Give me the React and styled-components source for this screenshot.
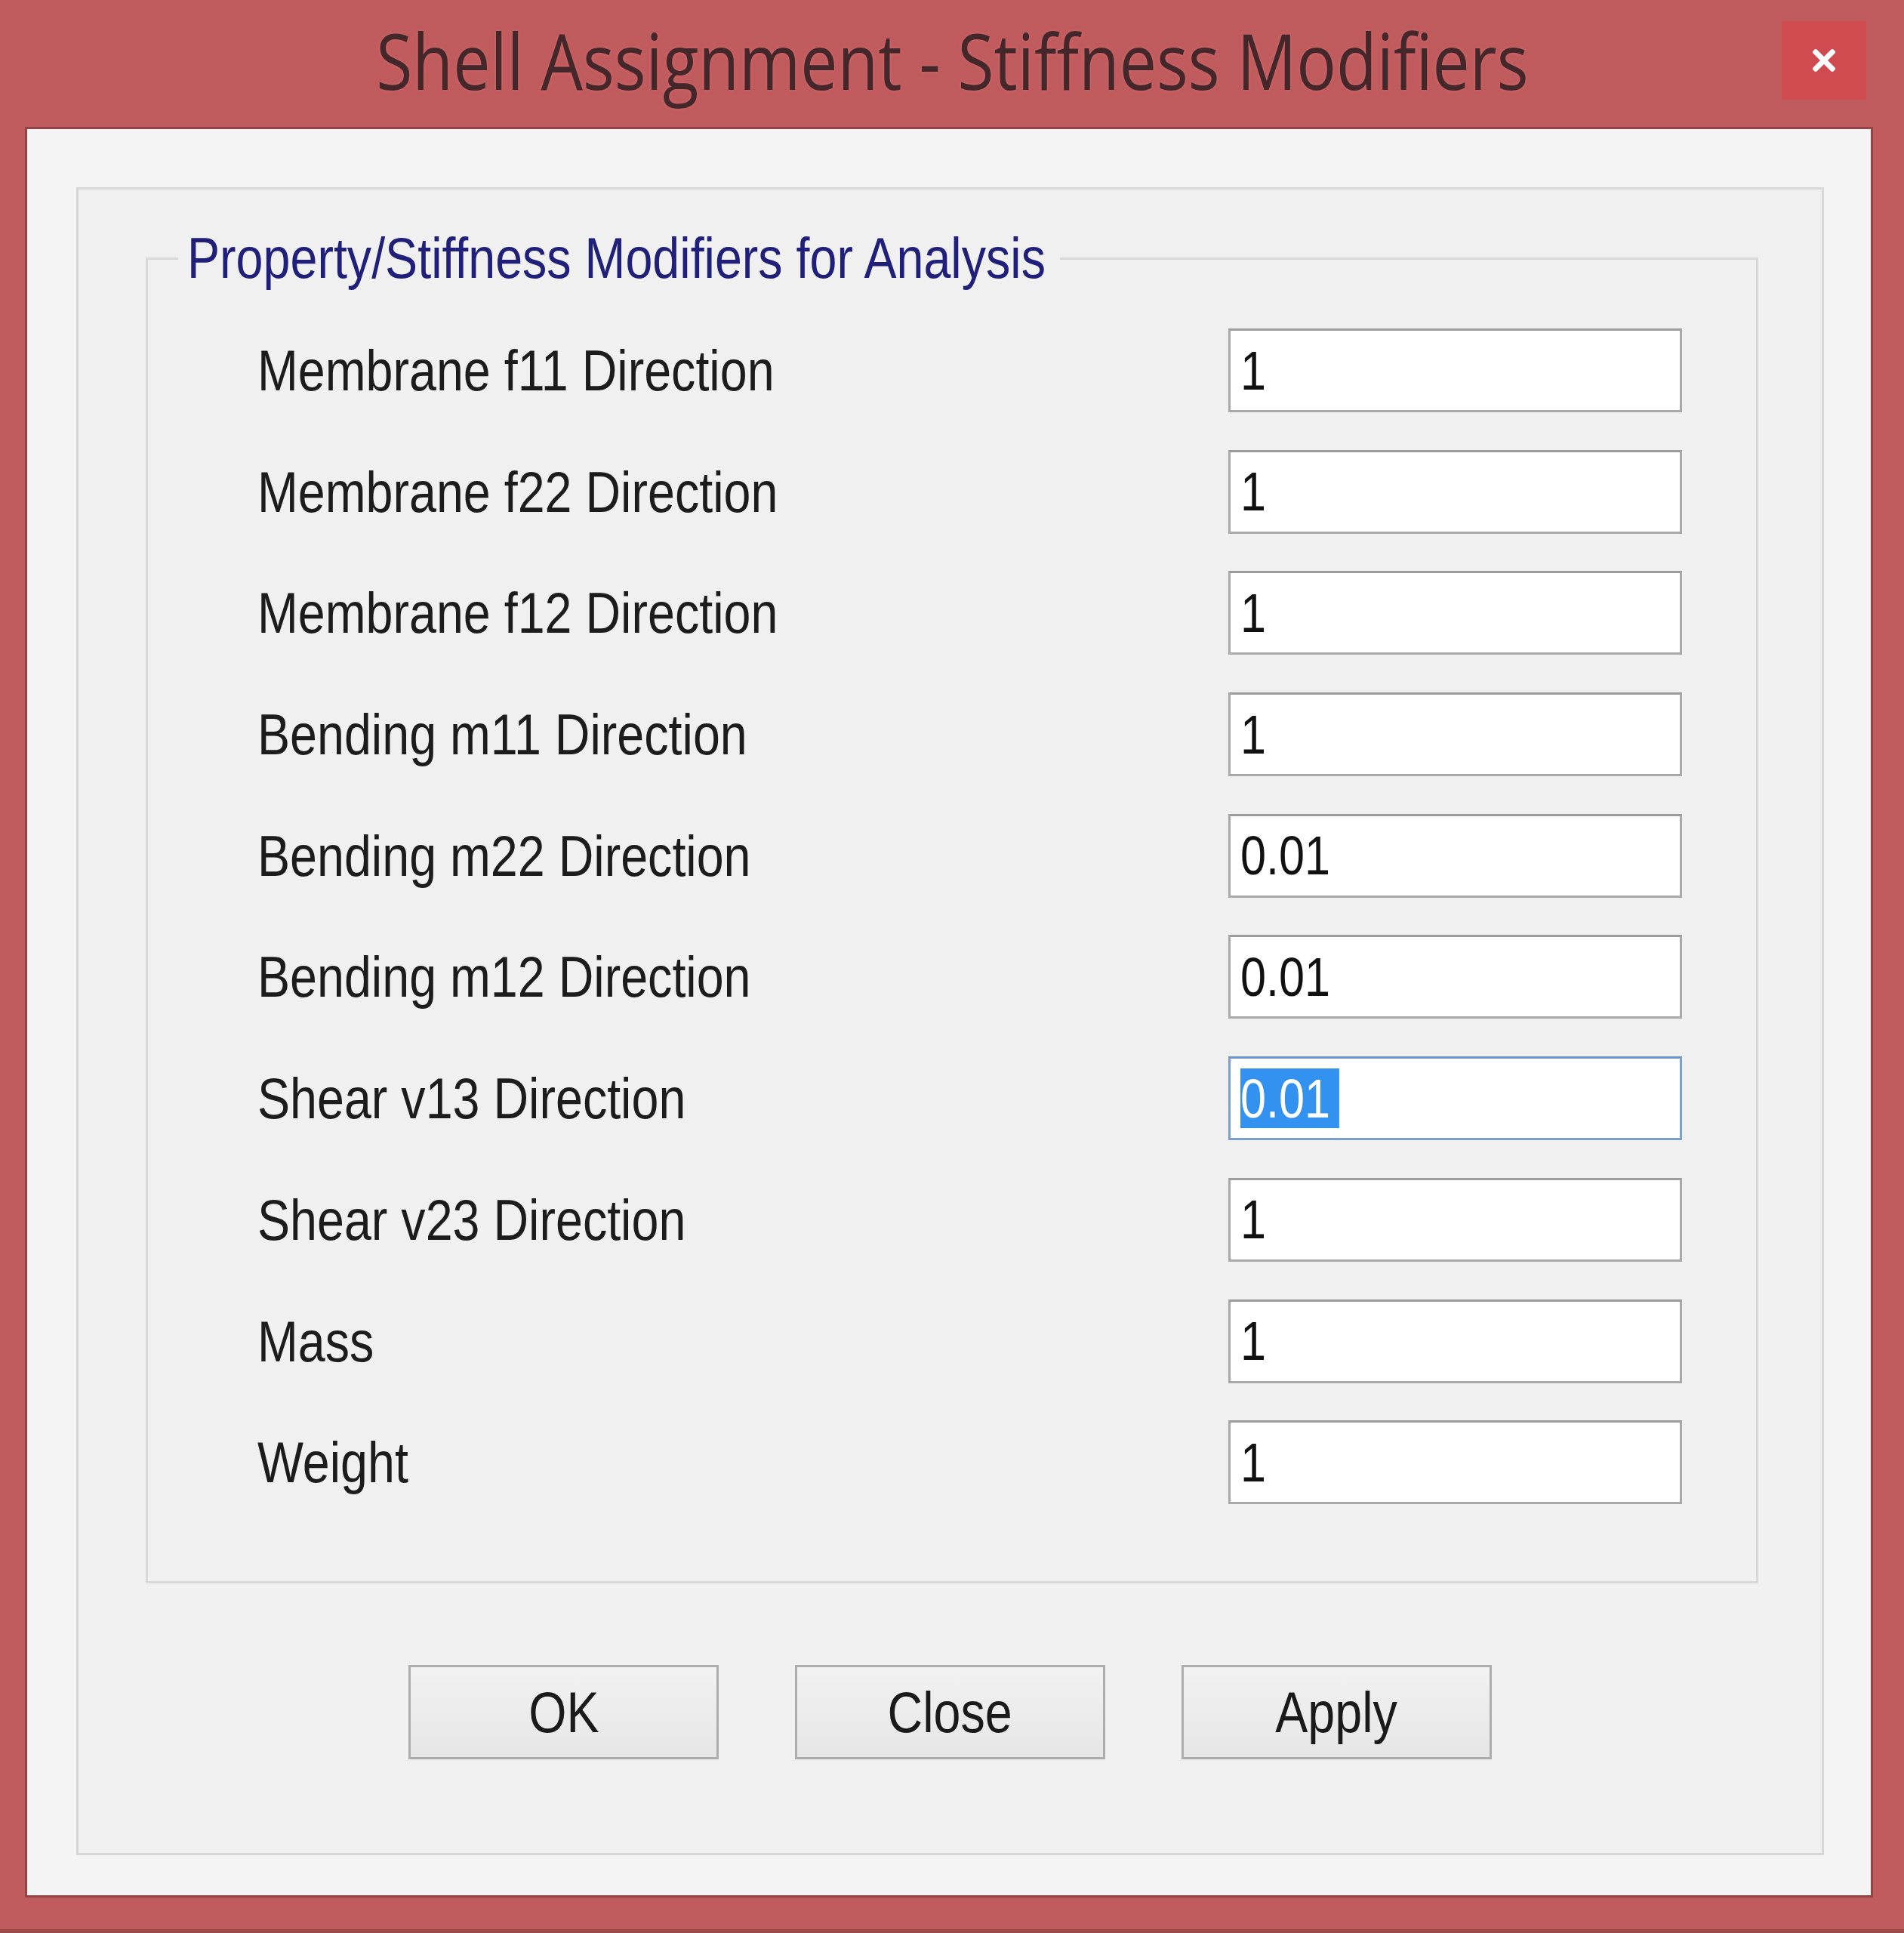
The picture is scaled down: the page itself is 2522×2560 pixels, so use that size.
import React from "react";
import styled, { createGlobalStyle } from "styled-components";

const GlobalStyle = createGlobalStyle`
  html, body { margin: 0; padding: 0; }
  body {
    width: 2522px;
    height: 2560px;
    overflow: hidden;
    font-family: "Liberation Sans", Arial, sans-serif;
  }
  * { box-sizing: border-box; }
`;

const Window = styled.div`
  width: 2522px;
  height: 2560px;
  background: #c05b5e;
  box-shadow: inset 0 -5px 0 #9b4a4c;
  display: flex;
  flex-direction: column;
`;

const TitleBar = styled.div`
  height: 171px;
  flex: none;
  display: grid;
  grid-template-columns: 1fr auto 1fr;
  align-items: center;
  padding-bottom: 12px;
`;

const Title = styled.div`
  grid-column: 2;
  font-family: "Open Sans", "Noto Sans", sans-serif;
  font-size: 102px;
  line-height: 1;
  color: #43272a;
  white-space: nowrap;
  transform: scaleX(0.86);
  text-shadow: 0 0 6px rgba(230, 120, 120, 0.5);
`;

const CloseButton = styled.div`
  grid-column: 3;
  justify-self: end;
  margin-right: 50px;
  width: 112px;
  height: 104px;
  background: #cf4b50;
  display: flex;
  align-items: center;
  justify-content: center;
`;

const Client = styled.div`
  flex: 1;
  margin: 0 44px 50px 36px;
  background: #f4f4f4;
  box-shadow: 0 0 0 3px rgba(110, 50, 52, 0.55);
  display: flex;
  flex-direction: column;
  padding: 77px 62px 53px 65px;
`;

const Panel = styled.div`
  flex: 1;
  background: #f0f0f0;
  border: 3px solid #d7d7d7;
  display: flex;
  flex-direction: column;
`;

const GroupBox = styled.fieldset`
  margin: 53px 84px 0 89px;
  padding: 0;
  min-width: 0;
  border: 3px solid #d9d9d9;
`;

const Legend = styled.legend`
  margin-left: 40px;
  padding: 0 12px;
  width: 1168px;
  font-size: 76px;
  line-height: 1;
  color: #20207a;
  white-space: nowrap;
`;

const Condensed = styled.span`
  display: inline-block;
  white-space: nowrap;
  transform: scaleX(0.85);
  transform-origin: ${(p) => (p.$center ? "center" : "left")} center;
`;

const Rows = styled.div`
  padding: 55px 98px 102px 145px;
  display: flex;
  flex-direction: column;
  gap: 49.7px;
`;

const Row = styled.div`
  height: 111px;
  display: flex;
  align-items: center;
  justify-content: space-between;
`;

const Label = styled.span`
  font-size: 76px;
  color: #1c1c1c;
`;

const Field = styled.div`
  width: 601px;
  height: 111px;
  background: #ffffff;
  border: 3px solid ${(p) => (p.$focused ? "#7b9fd0" : "#a9a9a9")};
  border-top-color: ${(p) => (p.$focused ? "#6f94c8" : "#9c9c9c")};
  display: flex;
  align-items: center;
  padding-left: 13px;
  font-size: 72px;
  color: #111111;
`;

const Selection = styled.span`
  height: 79px;
  display: flex;
  align-items: center;
  background: #3391f0;
  color: #ffffff;
  padding-right: 14px;
`;

const ButtonRow = styled.div`
  margin-top: 108px;
  display: flex;
  justify-content: center;
  gap: 101px;
`;

const Button = styled.div`
  width: 411px;
  height: 125px;
  border: 3px solid #adadad;
  background: linear-gradient(#f2f2f2, #e6e6e6);
  display: flex;
  align-items: center;
  justify-content: center;
  font-size: 76px;
  color: #1a1a1a;
`;

const rows = [
  ["Membrane f11 Direction", "1"],
  ["Membrane f22 Direction", "1"],
  ["Membrane f12 Direction", "1"],
  ["Bending m11 Direction", "1"],
  ["Bending m22 Direction", "0.01"],
  ["Bending m12 Direction", "0.01"],
  ["Shear v13 Direction", "0.01", true],
  ["Shear v23 Direction", "1"],
  ["Mass", "1"],
  ["Weight", "1"],
];

export default function App() {
  return (
    <>
      <GlobalStyle />
      <Window>
        <TitleBar>
          <Title>Shell Assignment - Stiffness Modifiers</Title>
          <CloseButton>
            <svg width="30" height="30" viewBox="0 0 30 30">
              <path d="M4 4 L26 26 M26 4 L4 26" stroke="#fff" strokeWidth="7" strokeLinecap="square" />
            </svg>
          </CloseButton>
        </TitleBar>
        <Client>
          <Panel>
            <GroupBox>
              <Legend>
                <Condensed>Property/Stiffness Modifiers for Analysis</Condensed>
              </Legend>
              <Rows>
                {rows.map(([label, value, focused]) => (
                  <Row key={label}>
                    <Label>
                      <Condensed>{label}</Condensed>
                    </Label>
                    <Field $focused={focused}>
                      <Condensed>
                        {focused ? <Selection>{value}</Selection> : value}
                      </Condensed>
                    </Field>
                  </Row>
                ))}
              </Rows>
            </GroupBox>
            <ButtonRow>
              {["OK", "Close", "Apply"].map((t) => (
                <Button key={t}>
                  <Condensed $center>{t}</Condensed>
                </Button>
              ))}
            </ButtonRow>
          </Panel>
        </Client>
      </Window>
    </>
  );
}
